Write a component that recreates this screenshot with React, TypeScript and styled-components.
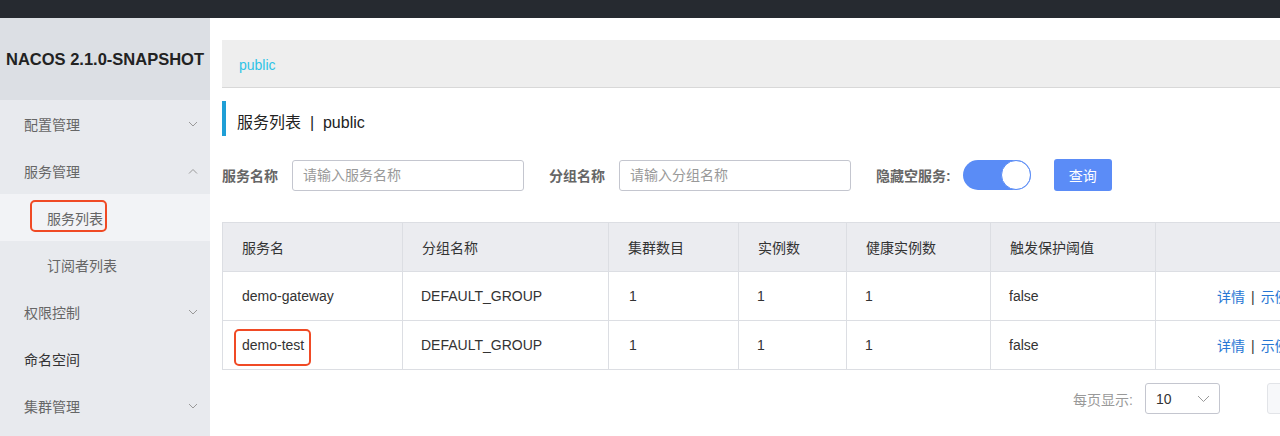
import React from "react";
import styled, { createGlobalStyle } from "styled-components";

const GlobalStyle = createGlobalStyle`
  body {
    margin: 0;
    overflow: hidden;
    background: #fff;
    font-family: "Liberation Sans", "Noto Sans CJK SC", sans-serif;
    color: #333;
  }
`;

const Page = styled.div`
  width: 1280px;
  height: 436px;
  display: flex;
  flex-direction: column;
  overflow: hidden;
`;

const TopBar = styled.div`
  height: 18px;
  flex: none;
  background: #262a30;
`;

const Body = styled.div`
  flex: 1;
  display: flex;
  min-height: 0;
`;

const Sidebar = styled.div`
  width: 210px;
  flex: none;
  background: #e8eaee;
  display: flex;
  flex-direction: column;
`;

const Logo = styled.div`
  height: 82px;
  background: #dcdfe4;
  display: flex;
  align-items: center;
  justify-content: center;
  font-size: 16.5px;
  font-weight: bold;
  color: #222;
  white-space: nowrap;
`;

const MenuItem = styled.div<{ $sub?: boolean; $active?: boolean; $dark?: boolean }>`
  height: 47px;
  display: flex;
  align-items: center;
  justify-content: space-between;
  padding: 0 12px 0 ${(p) => (p.$sub ? 47 : 24)}px;
  background: ${(p) => (p.$active ? "#f2f3f6" : "transparent")};
  font-size: 14px;
  color: ${(p) => (p.$dark ? "#333" : "#666")};
`;

const Highlight = styled.span<{ $l: number; $r: number; $t: number; $b: number }>`
  position: relative;
  &::after {
    content: "";
    position: absolute;
    left: ${(p) => p.$l}px;
    right: ${(p) => p.$r}px;
    top: ${(p) => p.$t}px;
    bottom: ${(p) => p.$b}px;
    border: 2.5px solid #f04a25;
    border-radius: 5px;
  }
`;

const Chevron = ({ up }: { up?: boolean }) => (
  <svg width="10" height="6" viewBox="0 0 10 6">
    <path
      d={up ? "M1 5.5 L5 1.5 L9 5.5" : "M1 1 L5 5 L9 1"}
      fill="none"
      stroke="#999"
      strokeWidth="1"
    />
  </svg>
);

const Main = styled.div`
  flex: 1;
  min-width: 0;
  padding: 22px 0 0 12px;
  overflow: hidden;
`;

const Breadcrumb = styled.div`
  height: 47px;
  background: #eeeeee;
  border-bottom: 1px solid #d8d8d8;
  display: flex;
  align-items: center;
  padding: 3px 0 0 17px;
  box-sizing: border-box;
  height: 48px;
  font-size: 14px;
  color: #2ec3e6;
`;

const Title = styled.div`
  margin-top: 13px;
  height: 35px;
  box-sizing: border-box;
  border-left: 4px solid #1f9fd6;
  padding: 4px 0 0 11px;
  display: flex;
  align-items: center;
  font-size: 16px;
  color: #222;
`;

const FilterRow = styled.div`
  margin-top: 23px;
  display: flex;
  align-items: center;
  height: 32px;
`;

const Label = styled.span<{ $gap: number }>`
  font-size: 14px;
  font-weight: bold;
  color: #666;
  margin-right: ${(p) => p.$gap}px;
`;

const Input = styled.input`
  width: 232px;
  height: 31px;
  box-sizing: border-box;
  border: 1px solid #c4c6cf;
  border-radius: 3px;
  padding: 0 10px;
  font-size: 14px;
  font-family: inherit;
  margin-right: 25px;
  &::placeholder {
    color: #999;
  }
`;

const Switch = styled.div`
  width: 68px;
  height: 30px;
  box-sizing: border-box;
  border-radius: 15px;
  background: #5a8cf6;
  position: relative;
  margin-right: 23px;
  &::after {
    content: "";
    position: absolute;
    right: 0;
    top: 0;
    width: 30px;
    height: 30px;
    box-sizing: border-box;
    border-radius: 50%;
    background: #fff;
    border: 1.5px solid #5a8cf6;
  }
`;

const Button = styled.button`
  width: 58px;
  height: 32px;
  border: none;
  border-radius: 3px;
  background: #5b8cf7;
  color: #fff;
  font-size: 14px;
  font-family: inherit;
`;

const Table = styled.table`
  margin-top: 31px;
  border-collapse: collapse;
  table-layout: fixed;
  width: 1180px;
  font-size: 14px;
  color: #333;
`;

const Th = styled.th<{ $w: number }>`
  width: ${(p) => p.$w}px;
  height: 49px;
  box-sizing: border-box;
  background: #ebecf0;
  border: 1px solid #dcdee3;
  text-align: left;
  padding: 0 0 0 19px;
  font-weight: normal;
`;

const Td = styled.td<{ $pad?: number }>`
  height: 49px;
  box-sizing: border-box;
  border: 1px solid #dcdee3;
  padding: 0 0 0 ${(p) => p.$pad ?? 18}px;
  white-space: nowrap;
  overflow: visible;
`;

const Link = styled.span`
  color: #2877d4;
`;

const Sep = styled.span`
  color: #333;
  margin: 0 6px;
`;

const Pagination = styled.div`
  width: 1180px;
  margin-top: 13px;
  display: flex;
  align-items: center;
  justify-content: flex-end;
  font-size: 14px;
`;

const PageLabel = styled.span`
  color: #999;
  margin-right: 12px;
`;

const Select = styled.div`
  width: 75px;
  height: 31px;
  box-sizing: border-box;
  border: 1px solid #c4c6cf;
  border-radius: 3px;
  display: flex;
  align-items: center;
  justify-content: space-between;
  padding: 0 9px 0 10px;
  color: #333;
  margin-right: 47px;
`;

const Pager = styled.div`
  width: 135px;
  height: 31px;
  box-sizing: border-box;
  border: 1px solid #e2e4e8;
  border-radius: 3px;
  background: #f7f8fa;
`;

const columns = [
  { title: "服务名", w: 180 },
  { title: "分组名称", w: 206 },
  { title: "集群数目", w: 130 },
  { title: "实例数", w: 108 },
  { title: "健康实例数", w: 144 },
  { title: "触发保护阈值", w: 165 },
  { title: "", w: 247 },
];

const rows = [
  { name: "demo-gateway", group: "DEFAULT_GROUP", mark: false },
  { name: "demo-test", group: "DEFAULT_GROUP", mark: true },
];

export default function App() {
  return (
    <Page>
      <GlobalStyle />
      <TopBar />
      <Body>
        <Sidebar>
          <Logo>NACOS 2.1.0-SNAPSHOT</Logo>
          <MenuItem>
            配置管理
            <Chevron />
          </MenuItem>
          <MenuItem>
            服务管理
            <Chevron up />
          </MenuItem>
          <MenuItem $sub $active>
            <Highlight $l={-17} $r={-4} $t={-8} $b={-4}>
              服务列表
            </Highlight>
          </MenuItem>
          <MenuItem $sub>订阅者列表</MenuItem>
          <MenuItem>
            权限控制
            <Chevron />
          </MenuItem>
          <MenuItem $dark>命名空间</MenuItem>
          <MenuItem>
            集群管理
            <Chevron />
          </MenuItem>
        </Sidebar>
        <Main>
          <Breadcrumb>public</Breadcrumb>
          <Title>服务列表&nbsp;&nbsp;|&nbsp;&nbsp;public</Title>
          <FilterRow>
            <Label $gap={14}>服务名称</Label>
            <Input placeholder="请输入服务名称" />
            <Label $gap={14}>分组名称</Label>
            <Input placeholder="请输入分组名称" />
            <Label $gap={12}>隐藏空服务:</Label>
            <Switch />
            <Button>查询</Button>
          </FilterRow>
          <Table>
            <thead>
              <tr>
                {columns.map((c, i) => (
                  <Th key={i} $w={c.w}>
                    {c.title}
                  </Th>
                ))}
              </tr>
            </thead>
            <tbody>
              {rows.map((r) => (
                <tr key={r.name}>
                  <Td $pad={19}>
                    {r.mark ? (
                      <Highlight $l={-8} $r={-7} $t={-8} $b={-13}>
                        {r.name}
                      </Highlight>
                    ) : (
                      r.name
                    )}
                  </Td>
                  <Td>{r.group}</Td>
                  <Td $pad={20}>1</Td>
                  <Td>1</Td>
                  <Td>1</Td>
                  <Td>false</Td>
                  <Td $pad={61}>
                    <Link>详情</Link>
                    <Sep>|</Sep>
                    <Link>示例</Link>
                  </Td>
                </tr>
              ))}
            </tbody>
          </Table>
          <Pagination>
            <PageLabel>每页显示:</PageLabel>
            <Select>
              10
              <svg width="13" height="8" viewBox="0 0 13 8">
                <path d="M1 1 L6.5 6.5 L12 1" fill="none" stroke="#999" strokeWidth="1" />
              </svg>
            </Select>
            <Pager />
          </Pagination>
        </Main>
      </Body>
    </Page>
  );
}
